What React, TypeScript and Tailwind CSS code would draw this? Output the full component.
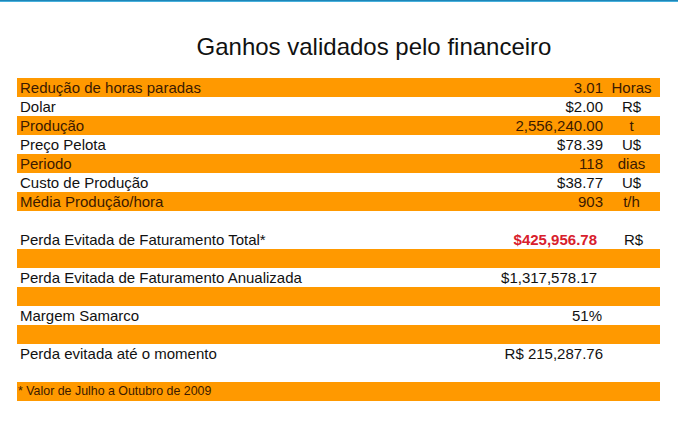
const font = { fontFamily: '"Liberation Sans", Arial, sans-serif' };

type Row = { label: string; value: string; unit: string };

const topRows: Row[] = [
  { label: 'Redução de horas paradas', value: '3.01', unit: 'Horas' },
  { label: 'Dolar', value: '$2.00', unit: 'R$' },
  { label: 'Produção', value: '2,556,240.00', unit: 't' },
  { label: 'Preço Pelota', value: '$78.39', unit: 'U$' },
  { label: 'Periodo', value: '118', unit: 'dias' },
  { label: 'Custo de Produção', value: '$38.77', unit: 'U$' },
  { label: 'Média Produção/hora', value: '903', unit: 't/h' },
];

const DataRow = ({ row, orange }: { row: Row; orange: boolean }) => (
  <div
    className={`flex h-[19px] items-center text-[15px] leading-[19px] ${
      orange ? 'bg-[#ff9900] text-[#3b1a00]' : 'bg-white text-[#111]'
    }`}
  >
    <span className="flex-1 pl-[3px]">{row.label}</span>
    <span className="text-right">{row.value}</span>
    <span className="w-[57px] text-center">{row.unit}</span>
  </div>
);

const Band = () => <div className="h-[19px] bg-[#ff9900]" />;

const PlainRow = ({ label, children }: { label: string; children?: React.ReactNode }) => (
  <div className="flex h-[19px] items-center text-[15px] leading-[19px] text-[#111]">
    <span className="flex-1 pl-[3px]">{label}</span>
    {children}
  </div>
);

export default function App() {
  return (
    <div className="h-[437px] w-[678px] overflow-hidden bg-white" style={font}>
      <div className="h-[1px] bg-[#1e86b8]" />
      <div className="h-[1px] bg-[#47b0dc]" />
      <div className="flex justify-center pl-[70px] pt-[33px]">
        <h1 className="text-[24px] leading-[24px] text-[#111]">Ganhos validados pelo financeiro</h1>
      </div>

      <div className="ml-[17px] mt-[19px] w-[643px]">
        {topRows.map((row, i) => (
          <DataRow key={row.label} row={row} orange={i % 2 === 0} />
        ))}

        <div className="h-[19px]" />
        <PlainRow label="Perda Evitada de Faturamento Total*">
          <span className="pr-[6px] text-right font-bold text-[#d8202c]">$425,956.78</span>
          <span className="w-[57px] pl-[21px]">R$</span>
        </PlainRow>
        <Band />
        <PlainRow label="Perda Evitada de Faturamento Anualizada">
          <span className="pr-[63px] text-right">$1,317,578.17</span>
        </PlainRow>
        <Band />
        <PlainRow label="Margem Samarco">
          <span className="pr-[58px] text-right">51%</span>
        </PlainRow>
        <Band />
        <PlainRow label="Perda evitada até o momento">
          <span className="pr-[57px] text-right">R$ 215,287.76</span>
        </PlainRow>
        <div className="h-[19px]" />
        <div className="flex h-[19px] items-center bg-[#ff9900] text-[12.4px] leading-[19px] text-[#3b1a00]">
          <span className="pl-[1px]">* Valor de Julho a Outubro de 2009</span>
        </div>
      </div>
    </div>
  );
}
